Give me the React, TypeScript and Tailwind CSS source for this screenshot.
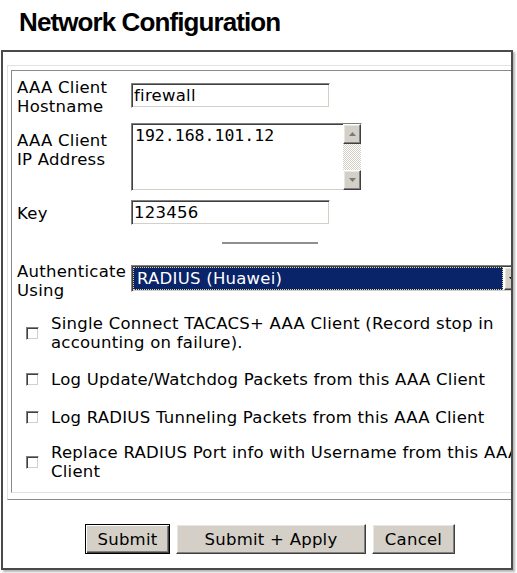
import React from 'react';

// classic win9x style bevels
const sunken =
  'border border-t-[#808080] border-l-[#808080] border-r-white border-b-white shadow-[inset_1px_1px_0_#404040,inset_-1px_-1px_0_#d4d0c8]';
const raised =
  'border border-t-white border-l-white border-r-[#404040] border-b-[#404040] shadow-[inset_-1px_-1px_0_#808080,inset_1px_1px_0_#e8e6e0] bg-[#d4d0c8]';

const Arrow = ({ up, color }: { up?: boolean; color: string }) => (
  <svg width="7" height="4" viewBox="0 0 7 4">
    <polygon points={up ? '0,4 3.5,0 7,4' : '0,0 7,0 3.5,4'} fill={color} />
  </svg>
);

const Check = ({ children }: { children: React.ReactNode }) => (
  <div className="flex items-center pl-[9px] gap-[12px] whitespace-nowrap">
    <input
      type="checkbox"
      readOnly
      className={`appearance-none w-[13px] h-[13px] bg-white shrink-0 ${sunken}`}
    />
    <div>{children}</div>
  </div>
);

export default function App() {
  return (
    <div className="w-[517px] h-[573px] bg-white overflow-hidden font-['DejaVu_Sans',Verdana,sans-serif] text-[16.5px] leading-[19px] tracking-[0.25px] text-black">
      <h1 className="h-[50px] pt-[9px] pl-[19px] font-['Liberation_Sans',Arial,sans-serif] font-bold text-[26px] leading-[26px] tracking-[-0.9px]">
        Network Configuration
      </h1>

      <div className="ml-[1px] w-[512px] h-[520px] border-2 border-[#4a4a4a] shadow-[2px_2px_2px_rgba(0,0,0,0.3)] overflow-hidden pt-[13px] pl-[4px]">
        {/* outer table */}
        <div className="w-[526px] border border-t-[#e4e2dc] border-l-[#e4e2dc] border-r-[#8a8a8a] border-b-[#8a8a8a] pt-[4px] px-[3px] pb-[6px]">
          {/* inner cell */}
          <div className="flex flex-col border border-t-[#8a8a8a] border-l-[#8a8a8a] border-r-[#e4e2dc] border-b-[#e4e2dc] pl-[5px] pb-[11px]">
            <div className="flex mt-[7px]">
              <div className="w-[114px]">
                AAA Client
                <br />
                Hostname
              </div>
              <input
                readOnly
                defaultValue="firewall"
                className={`mt-[5px] w-[199px] h-[25px] px-[2px] bg-white outline-none ${sunken}`}
              />
            </div>

            <div className="flex mt-[7px]">
              <div className="w-[114px] mt-[8px]">
                AAA Client
                <br />
                IP Address
              </div>
              <div className={`w-[231px] h-[68px] flex bg-white ${sunken}`}>
                <div className="flex-1 pl-[3px] pt-[2px] font-['DejaVu_Sans_Mono',monospace] text-[16.5px] tracking-normal">
                  192.168.101.12
                </div>
                <div className="w-[18px] flex flex-col">
                  <div className={`h-[20px] flex items-center justify-center ${raised}`}>
                    <Arrow up color="#7a7a7a" />
                  </div>
                  <div className="flex-1 bg-[repeating-conic-gradient(#d4d0c8_0_25%,#ffffff_0_50%)] bg-[length:2px_2px]" />
                  <div className={`h-[20px] flex items-center justify-center ${raised}`}>
                    <Arrow color="#7a7a7a" />
                  </div>
                </div>
              </div>
            </div>

            <div className="flex mt-[9px]">
              <div className="w-[114px] mt-[4px]">Key</div>
              <input
                readOnly
                defaultValue="123456"
                className={`w-[199px] h-[25px] px-[2px] bg-white outline-none ${sunken}`}
              />
            </div>

            <div className="mt-[17px] ml-[205px] w-[96px] h-[2px] bg-[#8f8f8f]" />

            <div className="flex mt-[18px]">
              <div className="w-[114px]">
                Authenticate
                <br />
                Using
              </div>
              <div className={`mt-[3px] w-[392px] h-[27px] flex bg-white p-[1px] ${sunken}`}>
                <div className="flex-1 flex items-center bg-[#0a246a] text-white pl-[3px] border border-dotted border-[#e6d98c] whitespace-nowrap">
                  RADIUS (Huawei)
                </div>
                <div className={`ml-[1px] w-[17px] flex items-center justify-center ${raised}`}>
                  <Arrow color="#000" />
                </div>
              </div>
            </div>

            <div className="mt-[14px]">
              <Check>
                Single Connect TACACS+ AAA Client (Record stop in
                <br />
                accounting on failure).
              </Check>
            </div>
            <div className="mt-[18px]">
              <Check>Log Update/Watchdog Packets from this AAA Client</Check>
            </div>
            <div className="mt-[19px]">
              <Check>Log RADIUS Tunneling Packets from this AAA Client</Check>
            </div>
            <div className="mt-[16px]">
              <Check>
                Replace RADIUS Port info with Username from this AAA
                <br />
                Client
              </Check>
            </div>
          </div>
        </div>

        <div className="w-[526px] mt-[24px] flex justify-center gap-[6px]">
          <button className="w-[85px] h-[30px] bg-[#d4d0c8] border border-black shadow-[inset_1px_1px_0_#fff,inset_-1px_-1px_0_#404040,inset_-2px_-2px_0_#808080]">
            Submit
          </button>
          <button className={`w-[190px] h-[30px] ${raised}`}>Submit + Apply</button>
          <button className={`w-[83px] h-[30px] ${raised}`}>Cancel</button>
        </div>
      </div>
    </div>
  );
}
